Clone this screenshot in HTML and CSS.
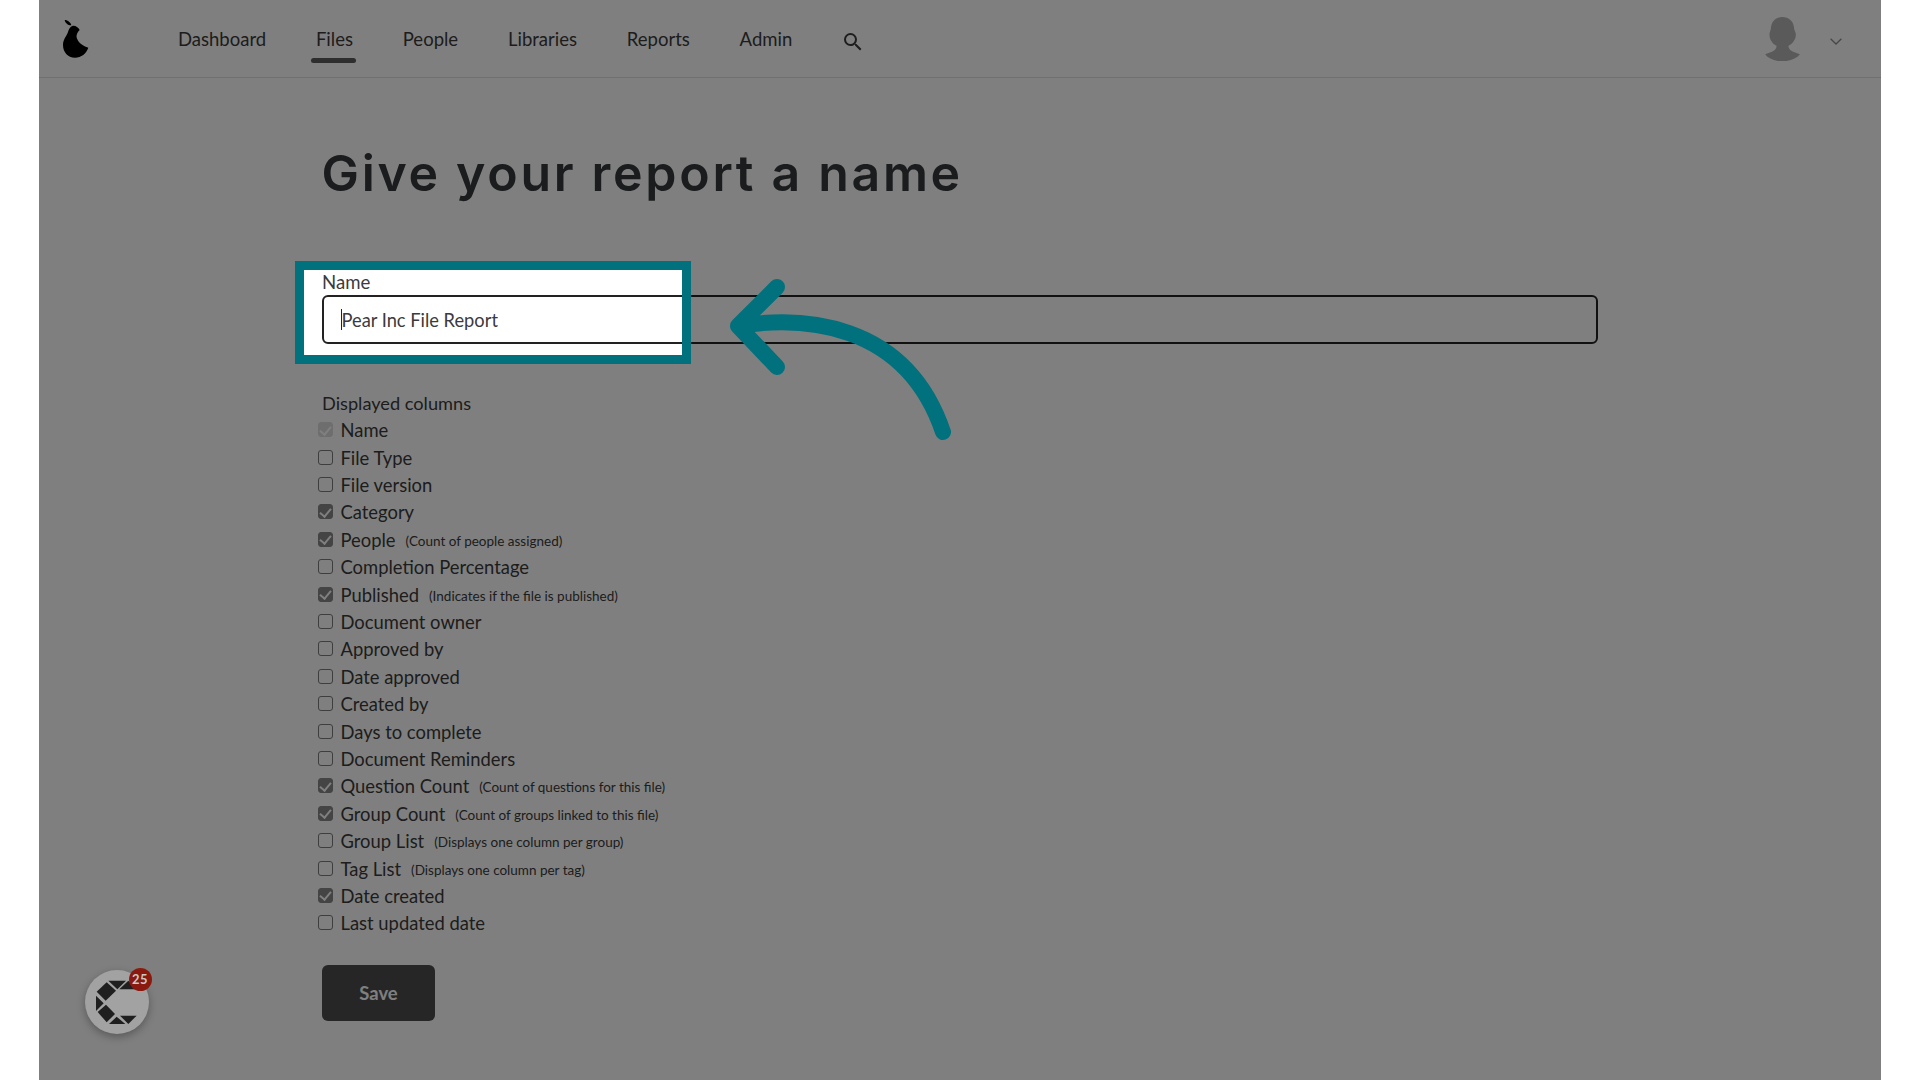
FILE: index.html
```html
<!DOCTYPE html>
<html lang="en">
<head>
<meta charset="utf-8">
<title>Give your report a name</title>
<link rel="stylesheet" href="styles.css">
</head>
<body>
<div class="stage">
  <header class="topbar">
    <svg class="logo" viewBox="40 30 78 114" aria-label="Pear logo"><path d="M45 30 C55 30 63 38 65 46 C56 47 47 40 45 30Z"/><path d="M68 48 C76 46 86 52 90 60 C82 68 78 78 83 88 C88 100 100 108 116 113 C110 130 95 143 76 143 C54 143 40 126 40 105 C40 88 50 80 55 66 C58 56 62 50 68 48Z"/></svg>
    <nav class="nav">
      <a class="nav-item">Dashboard</a>
      <a class="nav-item active">Files</a>
      <a class="nav-item">People</a>
      <a class="nav-item">Libraries</a>
      <a class="nav-item">Reports</a>
      <a class="nav-item">Admin</a>
      <svg class="search" viewBox="0 0 24 24"><path d="M15.5 14h-.79l-.28-.27A6.47 6.47 0 0 0 16 9.5 6.5 6.5 0 1 0 9.5 16c1.61 0 3.09-.59 4.23-1.57l.27.28v.79l5 4.99L20.49 19l-4.99-5zm-6 0C7.01 14 5 11.99 5 9.5S7.01 5 9.5 5 14 7.01 14 9.5 11.99 14 9.5 14z"/></svg>
    </nav>
    <div class="account">
      <svg class="avatar" viewBox="195 55 103 130"><path d="M195 165 C212 158 229 156 229 140 C217 135 208 122 208 107 C208 100 211 96 212 90 C213 68 226 55 245 55 C266 55 280 68 281 90 C282 96 286 100 286 107 C286 122 276 135 264 140 C264 156 282 158 298 165 C288 178 268 186 245 186 C224 186 205 178 195 165Z"/></svg>
      <svg class="chevron" viewBox="0 0 12 7"><path d="M.6.8 6 6 11.4.8"/></svg>
    </div>
  </header>
  <main class="content">
    <h1 class="title">Give your report a name</h1>
    <form class="form">
      <label class="field-label" for="report-name">Name</label>
      <div class="field">
        <input class="text-input" id="report-name" type="text" value="Pear Inc File Report">
        <span class="caret"></span>
      </div>
      <p class="group-label">Displayed columns</p>
      <ul class="columns">
        <li class="col"><input type="checkbox" checked disabled><span>Name</span></li>
        <li class="col"><input type="checkbox"><span>File Type</span></li>
        <li class="col"><input type="checkbox"><span>File version</span></li>
        <li class="col"><input type="checkbox" checked><span>Category</span></li>
        <li class="col"><input type="checkbox" checked><span>People</span><small>(Count of people assigned)</small></li>
        <li class="col"><input type="checkbox"><span>Completion Percentage</span></li>
        <li class="col"><input type="checkbox" checked><span>Published</span><small>(Indicates if the file is published)</small></li>
        <li class="col"><input type="checkbox"><span>Document owner</span></li>
        <li class="col"><input type="checkbox"><span>Approved by</span></li>
        <li class="col"><input type="checkbox"><span>Date approved</span></li>
        <li class="col"><input type="checkbox"><span>Created by</span></li>
        <li class="col"><input type="checkbox"><span>Days to complete</span></li>
        <li class="col"><input type="checkbox"><span>Document Reminders</span></li>
        <li class="col"><input type="checkbox" checked><span>Question Count</span><small>(Count of questions for this file)</small></li>
        <li class="col"><input type="checkbox" checked><span>Group Count</span><small>(Count of groups linked to this file)</small></li>
        <li class="col"><input type="checkbox"><span>Group List</span><small>(Displays one column per group)</small></li>
        <li class="col"><input type="checkbox"><span>Tag List</span><small>(Displays one column per tag)</small></li>
        <li class="col"><input type="checkbox" checked><span>Date created</span></li>
        <li class="col"><input type="checkbox"><span>Last updated date</span></li>
      </ul>
      <button class="save" type="button">Save</button>
    </form>
  </main>

  <div class="spotlight"></div>
  <svg class="arrow" viewBox="725 275 230 170"><path d="M777 287 L738 326 L777 367 M738 326 C800 316 905 320 943 432"/></svg>

  <div class="widget">
    <svg class="widget-logo" viewBox="75 60 192 192"><path d="M145 92H198L172 118Z"/><path d="M178 118 205 92 232 118Z"/><path d="M110 125 140 97 168 122 137 152Z"/><path d="M108 137 131 160 108 183Z"/><path d="M113 186 138 164 165 192 140 217Z"/><path d="M147 222 170 200 196 222Z"/><path d="M180 197H230L205 222Z"/></svg>
    <span class="badge">25</span>
  </div>
</div>
</body>
</html>
```
FILE: styles.css
```css
* { box-sizing: border-box; }
html, body { margin: 0; height: 100%; overflow: hidden; background: #fff; }
body { display: flex; justify-content: center; font-family: "Lato", "Liberation Sans", sans-serif; color: #3b3b3b; }

.stage { position: relative; width: 1842px; height: 1080px; background: #fff; overflow: hidden; flex: none; margin-left: -1px; }

.topbar { display: flex; align-items: center; height: 78px; border-bottom: 1px solid #e0e0e0; padding: 0 39px 0 24px; }
.logo { width: 26px; height: 38px; fill: #000; flex: none; margin-top: 1px; }
.nav { display: flex; align-items: center; gap: 41.8px; margin-left: 85.5px; height: 100%; }
.nav-item { position: relative; display: flex; align-items: center; height: 100%; padding: 1px 4px 0; font-size: 18.5px; color: #3b3b3b; }
.nav-item.active::after { content: ""; position: absolute; left: -.5px; right: .5px; top: 58px; height: 5px; border-radius: 3px; background: #5c5c5c; }
.search { width: 24px; height: 24px; fill: #3b3b3b; margin: 7px 0 0 3px; }
.account { display: flex; align-items: center; gap: 30px; margin-left: auto; }
.avatar { width: 35px; height: 44px; fill: #b5b5b5; }
.chevron { width: 12px; height: 7px; fill: none; stroke: #8a8f94; stroke-width: 1.3; margin-top: 5px; }

.content { padding: 0 0 0 283px; width: 1559px; }
.title { margin: 0; padding-top: 69px; height: 192px; font-family: "Inter", "Liberation Sans", sans-serif; font-weight: 600; font-size: 50px; letter-spacing: 2.7px; line-height: 52px; color: #34393b; }

.form { display: flex; flex-direction: column; align-items: flex-start; }
.field-label { font-size: 18.6px; line-height: 25px; color: #3b3b3b; height: 25px; padding-left: .5px; }
.field { position: relative; width: 100%; }
.text-input { display: block; width: 100%; height: 49px; border: 2px solid #222; border-radius: 6px; padding: 1px 18px 0; font: 18.3px "Lato", sans-serif; color: #3b3b3b; background: #fff; outline: none; }
.caret { position: absolute; left: 19px; top: 14px; width: 1px; height: 21px; background: #222; }
.group-label { margin: 46px 0 -1px; padding-left: .5px; font-size: 18.2px; line-height: 27.4px; }

.columns { list-style: none; margin: .2px 0 0; padding: 0; }
.col { display: flex; align-items: center; height: 27.4px; font-size: 18.4px; margin-left: -4px; }
.col input { appearance: none; position: relative; flex: none; width: 15px; height: 15px; margin: -1px 8px 0 0; border: 1.5px solid #7c7c7c; border-radius: 3px; background: #fff; }
.col input:checked { background: #888; border-color: #888; }
.col input:checked::after { content: ""; position: absolute; left: 3.5px; top: .5px; width: 5px; height: 9px; border: solid #fff; border-width: 0 2px 2px 0; transform: rotate(40deg); }
.col input:disabled { background: #ddd; border-color: #ddd; }
.col small { font-size: 13.5px; margin-left: 10px; padding-top: 2px; }

.save { margin-top: 27.8px; width: 113px; height: 56px; border: 0; border-radius: 6px; background: #4c4c4c; color: #fff; font: 700 18.4px "Lato", sans-serif; padding: 0 0 0 1px; }

.spotlight { position: absolute; left: 256px; top: 261px; width: 396px; height: 103px; border: 9.5px solid #00717d; box-shadow: 0 0 0 3000px rgba(0,0,0,.5); pointer-events: none; }
.arrow { position: absolute; left: 686px; top: 275px; width: 230px; height: 170px; fill: none; stroke: #00717d; stroke-width: 16; stroke-linecap: round; stroke-linejoin: round; }

.widget { position: absolute; left: 46px; top: 970px; width: 64px; height: 64px; border-radius: 50%; background: #a2a2a2; box-shadow: 0 3px 8px rgba(0,0,0,.3); }
.widget-logo { display: block; width: 64px; height: 64px; fill: #1f1f1f; }
.badge { position: absolute; left: 44px; top: -2px; width: 23px; height: 23px; border-radius: 50%; background: #8a1a10; color: #c8c8c8; font-size: 13px; font-weight: 700; letter-spacing: .5px; line-height: 23px; text-align: center; }
```
